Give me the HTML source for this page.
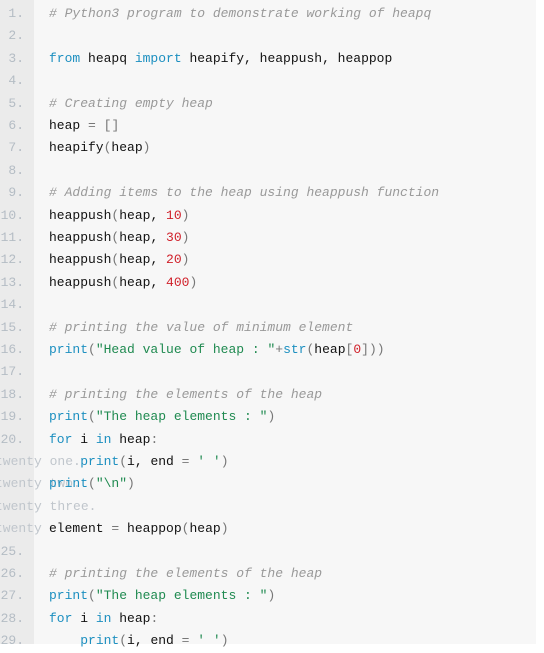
<!DOCTYPE html>
<html><head><meta charset="utf-8"><style>
html,body{margin:0;padding:0;background:#fff;width:544px;height:644px;overflow:hidden}
.wrap{position:absolute;left:0;top:0;width:536px;height:644px;background:#f7f7f7}
.gut{position:absolute;left:0;top:0;width:34px;height:644px;background:#ebebeb}
.l{position:absolute;left:0;height:22.4px;line-height:22.4px;font-family:"Liberation Mono","DejaVu Sans Mono",monospace;font-size:13px;white-space:pre;width:536px}
.n{position:absolute;right:512px;color:#b4bcc4;text-align:right}
.w{position:absolute;left:-5px;color:#c0c6cc}
.c{position:absolute;left:49px;color:#111}
.cm{color:#999;font-style:italic}
.k{color:#1c8fc0}
.s{color:#1f8a50}
.m{color:#d0202a}
.p{color:#777}
</style></head><body><div class="wrap"><div class="gut"></div>
<div class="l" style="top:3px"><span class="n">1.</span><span class="c"><span class="cm"># Python3 program to demonstrate working of heapq</span></span></div>
<div class="l" style="top:25.4px"><span class="n">2.</span></div>
<div class="l" style="top:47.8px"><span class="n">3.</span><span class="c"><span class="k">from</span> heapq <span class="k">import</span> heapify, heappush, heappop</span></div>
<div class="l" style="top:70.2px"><span class="n">4.</span></div>
<div class="l" style="top:92.6px"><span class="n">5.</span><span class="c"><span class="cm"># Creating empty heap</span></span></div>
<div class="l" style="top:115px"><span class="n">6.</span><span class="c">heap <span class="p">=</span> <span class="p">[]</span></span></div>
<div class="l" style="top:137.4px"><span class="n">7.</span><span class="c">heapify<span class="p">(</span>heap<span class="p">)</span></span></div>
<div class="l" style="top:159.8px"><span class="n">8.</span></div>
<div class="l" style="top:182.2px"><span class="n">9.</span><span class="c"><span class="cm"># Adding items to the heap using heappush function</span></span></div>
<div class="l" style="top:204.6px"><span class="n">10.</span><span class="c">heappush<span class="p">(</span>heap, <span class="m">10</span><span class="p">)</span></span></div>
<div class="l" style="top:227px"><span class="n">11.</span><span class="c">heappush<span class="p">(</span>heap, <span class="m">30</span><span class="p">)</span></span></div>
<div class="l" style="top:249.4px"><span class="n">12.</span><span class="c">heappush<span class="p">(</span>heap, <span class="m">20</span><span class="p">)</span></span></div>
<div class="l" style="top:271.8px"><span class="n">13.</span><span class="c">heappush<span class="p">(</span>heap, <span class="m">400</span><span class="p">)</span></span></div>
<div class="l" style="top:294.2px"><span class="n">14.</span></div>
<div class="l" style="top:316.6px"><span class="n">15.</span><span class="c"><span class="cm"># printing the value of minimum element</span></span></div>
<div class="l" style="top:339px"><span class="n">16.</span><span class="c"><span class="k">print</span><span class="p">(</span><span class="s">"Head value of heap : "</span><span class="p">+</span><span class="k">str</span><span class="p">(</span>heap<span class="p">[</span><span class="m">0</span><span class="p">]))</span></span></div>
<div class="l" style="top:361.4px"><span class="n">17.</span></div>
<div class="l" style="top:383.8px"><span class="n">18.</span><span class="c"><span class="cm"># printing the elements of the heap</span></span></div>
<div class="l" style="top:406.2px"><span class="n">19.</span><span class="c"><span class="k">print</span><span class="p">(</span><span class="s">"The heap elements : "</span><span class="p">)</span></span></div>
<div class="l" style="top:428.6px"><span class="n">20.</span><span class="c"><span class="k">for</span> i <span class="k">in</span> heap<span class="p">:</span></span></div>
<div class="l" style="top:451px"><span class="w">twenty one.</span><span class="c">    <span class="k">print</span><span class="p">(</span>i, end <span class="p">=</span> <span class="s">' '</span><span class="p">)</span></span></div>
<div class="l" style="top:473.4px"><span class="w">twenty two.</span><span class="c"><span class="k">print</span><span class="p">(</span><span class="s">"\n"</span><span class="p">)</span></span></div>
<div class="l" style="top:495.8px"><span class="w">twenty three.</span></div>
<div class="l" style="top:518.2px"><span class="w">twenty four.</span><span class="c" style="background:#f7f7f7">element <span class="p">=</span> heappop<span class="p">(</span>heap<span class="p">)</span></span></div>
<div class="l" style="top:540.6px"><span class="n">25.</span></div>
<div class="l" style="top:563px"><span class="n">26.</span><span class="c"><span class="cm"># printing the elements of the heap</span></span></div>
<div class="l" style="top:585.4px"><span class="n">27.</span><span class="c"><span class="k">print</span><span class="p">(</span><span class="s">"The heap elements : "</span><span class="p">)</span></span></div>
<div class="l" style="top:607.8px"><span class="n">28.</span><span class="c"><span class="k">for</span> i <span class="k">in</span> heap<span class="p">:</span></span></div>
<div class="l" style="top:630.2px"><span class="n">29.</span><span class="c">    <span class="k">print</span><span class="p">(</span>i, end <span class="p">=</span> <span class="s">' '</span><span class="p">)</span></span></div>
</div></body></html>
